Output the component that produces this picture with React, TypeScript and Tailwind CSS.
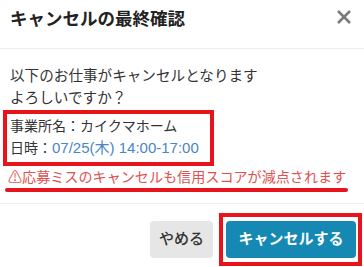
import React from 'react';

const font = { fontFamily: '"Liberation Sans", "Noto Sans CJK JP", sans-serif' };

export default function App() {
  return (
    <div className="w-[364px] h-[267px] bg-white overflow-hidden text-[#333]" style={font}>
      {/* header */}
      <div className="h-[49px] flex items-start justify-between pl-[10px] pr-[12px] pt-[6px] border-b border-[#eeeeee]">
        <h2 className="text-[17.5px] font-bold leading-[26px] text-[#222]">キャンセルの最終確認</h2>
        <button className="mt-[3px]" aria-label="close">
          <svg width="16" height="16" viewBox="0 0 16 16">
            <path d="M2 2 L14 14 M14 2 L2 14" stroke="#7a7a7a" strokeWidth="2.6" />
          </svg>
        </button>
      </div>

      {/* body */}
      <div className="pt-[16px] px-[10px] text-[14.6px] leading-[22px]">
        <p>以下のお仕事がキャンセルとなります</p>
        <p>よろしいですか？</p>

        <div className="relative mt-[1px] py-[5px] text-[14px]">
          <p>事業所名：カイクマホーム</p>
          <p>
            日時：<span className="text-[#4a86c6] text-[15px]">07/25(木) 14:00-17:00</span>
          </p>
          <span className="absolute left-[-7px] top-0 w-[211px] h-[56px] border-[4px] border-[#e8141c] pointer-events-none" />
        </div>

        <div className="relative mt-[2px] pb-[4px]">
          <p className="text-[#e05050] text-[14.1px] whitespace-nowrap -ml-[2px]">⚠応募ミスのキャンセルも信用スコアが減点されます</p>
          <span className="absolute left-[-5px] top-[22px] w-[343px] h-[4px] rounded-full bg-[#e8141c]" />
        </div>
      </div>

      {/* footer */}
      <div className="mt-[11px] border-t border-[#eeeeee] flex justify-end items-center gap-[13px] pt-[17px] pr-[8px]">
        <button className="w-[63px] h-[37px] rounded-[4px] bg-[#e6e6e6] text-[15px] font-medium text-[#333]">
          やめる
        </button>
        <div className="relative">
          <button className="w-[130px] h-[37px] rounded-[4px] bg-[#1589b4] text-[15px] font-bold text-white">
            キャンセルする
          </button>
          <span className="absolute left-[-7px] top-[-8px] w-[143px] h-[53px] border-[4px] border-[#e8141c] pointer-events-none" />
        </div>
      </div>
    </div>
  );
}
